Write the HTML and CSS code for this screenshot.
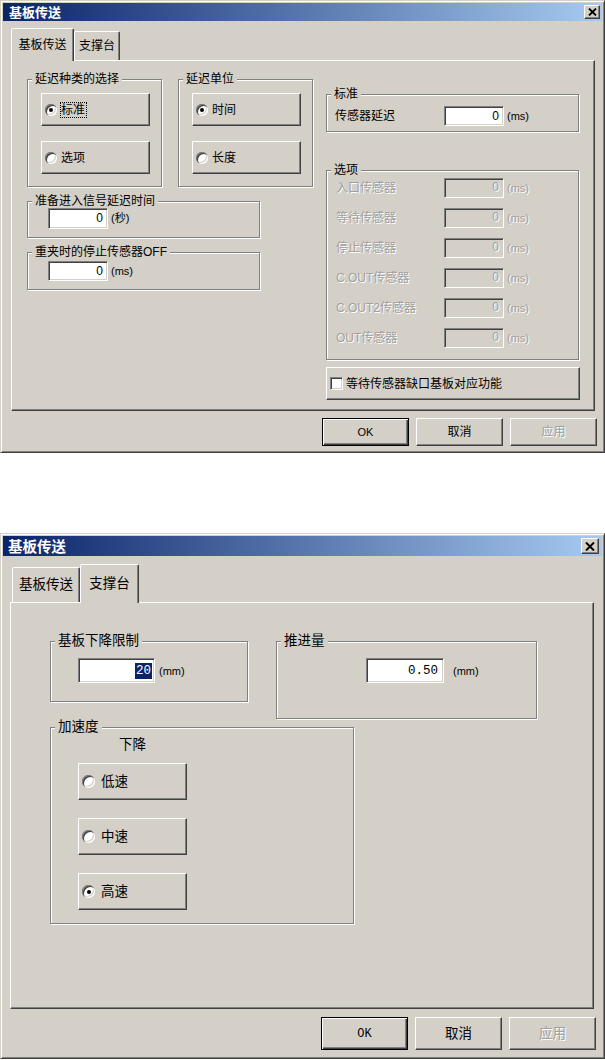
FILE: index.html
```html
<!DOCTYPE html>
<html lang="zh-CN">
<head>
    <meta charset="UTF-8">
    <title>基板传送</title>
    <link rel="stylesheet" href="styles.css">
</head>
<body>
    <!-- Tab 1: 基板传送 -->
    <div class="dialog dlg-delay">
        <div class="titlebar">
            <span class="title">基板传送</span>
            <span class="close-btn">
                <svg width="9" height="8" viewBox="0 0 9 8"><path d="M1 0.5l7 7M8 0.5l-7 7" stroke="#000" stroke-width="1.8"/></svg>
            </span>
        </div>
        <div class="dialog-body">
            <div class="tabs">
                <div class="tab active">基板传送</div>
                <div class="tab">支撑台</div>
            </div>
            <div class="panel">
                <div class="col-left">
                    <div class="group-row">
                        <div class="group g-choice">
                            <span class="caption">延迟种类的选择</span>
                            <div class="opt-btn"><span class="radio checked"></span><span class="focus">标准</span></div>
                            <div class="opt-btn"><span class="radio"></span><span>选项</span></div>
                        </div>
                        <div class="group g-choice">
                            <span class="caption">延迟单位</span>
                            <div class="opt-btn"><span class="radio checked"></span><span>时间</span></div>
                            <div class="opt-btn"><span class="radio"></span><span>长度</span></div>
                        </div>
                    </div>
                    <div class="group g-ready">
                        <span class="caption">准备进入信号延迟时间</span>
                        <div class="field-row">
                            <span class="field">0</span><span class="unit">(秒)</span>
                        </div>
                    </div>
                    <div class="group g-reclamp">
                        <span class="caption">重夹时的停止传感器OFF</span>
                        <div class="field-row">
                            <span class="field">0</span><span class="unit">(ms)</span>
                        </div>
                    </div>
                </div>
                <div class="col-right">
                    <div class="group g-std">
                        <span class="caption">标准</span>
                        <div class="field-row">
                            <span class="label">传感器延迟</span><span class="field">0</span><span class="unit">(ms)</span>
                        </div>
                    </div>
                    <div class="group g-opts">
                        <span class="caption">选项</span>
                        <div class="field-row disabled">
                            <span class="label">入口传感器</span><span class="field">0</span><span class="unit">(ms)</span>
                        </div>
                        <div class="field-row disabled">
                            <span class="label">等待传感器</span><span class="field">0</span><span class="unit">(ms)</span>
                        </div>
                        <div class="field-row disabled">
                            <span class="label">停止传感器</span><span class="field">0</span><span class="unit">(ms)</span>
                        </div>
                        <div class="field-row disabled">
                            <span class="label">C.OUT传感器</span><span class="field">0</span><span class="unit">(ms)</span>
                        </div>
                        <div class="field-row disabled">
                            <span class="label">C.OUT2传感器</span><span class="field">0</span><span class="unit">(ms)</span>
                        </div>
                        <div class="field-row disabled">
                            <span class="label">OUT传感器</span><span class="field">0</span><span class="unit">(ms)</span>
                        </div>
                    </div>
                    <div class="chk-btn"><span class="checkbox"></span><span>等待传感器缺口基板对应功能</span></div>
                </div>
            </div>
            <div class="actions">
                <span class="btn default">OK</span>
                <span class="btn">取消</span>
                <span class="btn disabled">应用</span>
            </div>
        </div>
    </div>

    <!-- Tab 2: 支撑台 -->
    <div class="dialog dlg-support">
        <div class="titlebar">
            <span class="title">基板传送</span>
            <span class="close-btn">
                <svg width="10" height="9" viewBox="0 0 10 9"><path d="M1 0.5l8 8M9 0.5l-8 8" stroke="#000" stroke-width="2"/></svg>
            </span>
        </div>
        <div class="dialog-body">
            <div class="tabs">
                <div class="tab">基板传送</div>
                <div class="tab active">支撑台</div>
            </div>
            <div class="panel">
                <div class="group-row">
                    <div class="group g-limit">
                        <span class="caption">基板下降限制</span>
                        <div class="field-row">
                            <span class="field num"><span class="sel">20</span></span><span class="unit">(mm)</span>
                        </div>
                    </div>
                    <div class="group g-feed">
                        <span class="caption">推进量</span>
                        <div class="field-row">
                            <span class="field num">0.50</span><span class="unit">(mm)</span>
                        </div>
                    </div>
                </div>
                <div class="group g-accel">
                    <span class="caption">加速度</span>
                    <div class="sub-label">下降</div>
                    <div class="opt-btn"><span class="radio"></span><span>低速</span></div>
                    <div class="opt-btn"><span class="radio"></span><span>中速</span></div>
                    <div class="opt-btn"><span class="radio checked"></span><span>高速</span></div>
                </div>
            </div>
            <div class="actions">
                <span class="btn default">OK</span>
                <span class="btn">取消</span>
                <span class="btn disabled">应用</span>
            </div>
        </div>
    </div>
</body>
</html>
```

FILE: styles.css
```css
* {
    box-sizing: border-box;
}

body {
    margin: 0;
    background-color: #fff;
    font-family: "Liberation Sans", "Noto Sans CJK SC", sans-serif;
    font-size: 12px;
    line-height: 14px;
    color: #000;
}

/* Window frame */
.dialog {
    width: 605px;
    padding: 2px;
    background-color: #d4d0c8;
    border: 1px solid;
    border-color: #d4d0c8 #404040 #404040 #d4d0c8;
    box-shadow: inset 1px 1px #fff, inset -1px -1px #808080;
}

.dlg-delay {
    height: 453px;
}

.dlg-support {
    height: 526px;
    margin-top: 80px;
    font-size: 13.5px;
    line-height: 16px;
}

.titlebar {
    display: flex;
    align-items: center;
    justify-content: space-between;
    height: 18px;
    padding: 0 2px 0 6px;
    background: linear-gradient(to right, #0a246a, #a6caf0);
}

.title {
    color: #fff;
    font-weight: bold;
    font-size: 13px;
    font-family: "Noto Sans CJK SC", sans-serif;
}

.close-btn {
    display: flex;
    align-items: center;
    justify-content: center;
    width: 16px;
    height: 14px;
    background-color: #d4d0c8;
    border: 1px solid;
    border-color: #fff #404040 #404040 #fff;
    box-shadow: inset -1px -1px #808080;
}

.dlg-support .titlebar {
    height: 20px;
    padding: 0 3px 0 5px;
}

.dlg-support .title {
    font-size: 14.5px;
}

.dlg-support .close-btn {
    width: 18px;
    height: 16px;
}

.dialog-body {
    padding: 0 7px 0 8px;
}

.dlg-support .dialog-body {
    padding: 0 8px 0 7px;
}

/* Tabs */
.tabs {
    display: flex;
    align-items: flex-end;
    height: 32px;
    margin-top: 7px;
}

.tab {
    display: flex;
    align-items: center;
    justify-content: center;
    width: 46px;
    height: 29px;
    background-color: #d4d0c8;
    border: 1px solid;
    border-bottom: none;
    border-color: #fff #404040 transparent #fff;
    border-radius: 2px 2px 0 0;
    box-shadow: inset -1px 0 #808080;
}

.tab.active {
    position: relative;
    z-index: 1;
    width: 63px;
    height: 33px;
    margin-bottom: -1px;
}

.dlg-support .tabs {
    height: 38px;
    margin-top: 8px;
    padding-left: 2px;
}

.dlg-support .tab {
    width: 68px;
    height: 35px;
}

.dlg-support .tab.active {
    width: 59px;
    height: 39px;
}

.panel {
    display: flex;
    gap: 13px;
    height: 351px;
    padding: 18px 0 0 15px;
    border: 1px solid;
    border-color: #fff #404040 #404040 #fff;
    box-shadow: inset -1px -1px #808080;
}

.dlg-support .panel {
    flex-direction: column;
    align-items: flex-start;
    gap: 0;
    height: 407px;
    padding: 38px 0 0 39px;
}

/* Group boxes */
.group {
    position: relative;
    border: 1px solid #808080;
    box-shadow: inset 1px 1px #fff, 1px 1px #fff;
}

.caption {
    position: absolute;
    top: -8px;
    left: 4px;
    padding: 0 3px;
    line-height: 14px;
    background-color: #d4d0c8;
    white-space: nowrap;
}

.dlg-support .caption {
    top: -9px;
    left: 4px;
    line-height: 16px;
}

.col-left {
    display: flex;
    flex-direction: column;
    align-items: flex-start;
}

.col-right {
    display: flex;
    flex-direction: column;
    width: 254px;
}

.group-row {
    display: flex;
    gap: 16px;
}

.g-choice {
    display: flex;
    flex-direction: column;
    gap: 15px;
    width: 135px;
    height: 108px;
    padding: 13px 0 0 13px;
}

.g-ready {
    width: 233px;
    height: 37px;
    margin-top: 14px;
    padding: 6px 0 0 20px;
}

.g-ready .field {
    height: 21px;
}

.g-reclamp {
    width: 233px;
    height: 38px;
    margin-top: 14px;
    padding: 8px 0 0 20px;
}

.g-std {
    width: 253px;
    height: 38px;
    margin-top: 15px;
    padding: 11px 0 0 8px;
}

.g-opts {
    display: flex;
    flex-direction: column;
    gap: 10px;
    width: 253px;
    height: 190px;
    margin-top: 38px;
    padding: 7px 0 0 9px;
}

.g-opts .label {
    width: 108px;
}

/* Push-like option buttons */
.opt-btn {
    display: flex;
    align-items: center;
    width: 109px;
    height: 33px;
    background-color: #d4d0c8;
    border: 1px solid;
    border-color: #fff #404040 #404040 #fff;
    box-shadow: inset -1px -1px #808080;
}

.radio {
    position: relative;
    flex: none;
    width: 12px;
    height: 12px;
    margin: 0 4px 0 3px;
    border-radius: 50%;
    background-color: #fff;
    box-shadow: inset 1px 1px #808080, inset 2px 2px #404040, inset -1px -1px #fff, inset -2px -2px #d4d0c8;
}

.radio.checked::after {
    content: "";
    position: absolute;
    top: 4px;
    left: 4px;
    width: 4px;
    height: 4px;
    border-radius: 50%;
    background-color: #000;
}

.focus {
    margin-left: -1px;
    padding-right: 1px;
    border: 1px dotted #000;
}

.chk-btn {
    display: flex;
    align-items: center;
    width: 254px;
    height: 33px;
    margin-top: 7px;
    padding-left: 3px;
    border: 1px solid;
    border-color: #fff #404040 #404040 #fff;
    box-shadow: inset -1px -1px #808080;
}

.checkbox {
    width: 13px;
    height: 13px;
    margin-right: 3px;
    background-color: #fff;
    border: 1px solid;
    border-color: #808080 #fff #fff #808080;
    box-shadow: inset 1px 1px #404040, inset -1px -1px #d4d0c8;
}

/* Edit fields */
.field-row {
    display: flex;
    align-items: center;
    height: 20px;
}

.label {
    width: 109px;
    white-space: nowrap;
}

.field {
    display: flex;
    align-items: center;
    justify-content: flex-end;
    width: 60px;
    height: 20px;
    padding-right: 4px;
    background-color: #fff;
    border: 1px solid;
    border-color: #808080 #fff #fff #808080;
    box-shadow: inset 1px 1px #404040, inset -1px -1px #d4d0c8;
}

.unit {
    margin-left: 3px;
    font-size: 11px;
}

.disabled .label,
.disabled .field,
.disabled .unit {
    color: #a0a0a0;
    text-shadow: 1px 1px #fff;
}

.disabled .field {
    align-items: flex-start;
    padding-top: 1px;
    background-color: #d4d0c8;
}

/* Support tab */
.dlg-support .group-row {
    align-items: flex-start;
    gap: 28px;
}

.dlg-support .field-row {
    height: 25px;
}

.dlg-support .field {
    height: 25px;
    padding-right: 4px;
}

.num {
    font-family: "Liberation Mono", monospace;
    font-size: 12.5px;
}

.sel {
    padding: 0 1px;
    background-color: #0a246a;
    color: #fff;
}

.g-limit {
    width: 198px;
    height: 61px;
    padding: 16px 0 0 27px;
}

.g-limit .field {
    width: 77px;
    padding-right: 2px;
}

.g-limit .unit {
    margin-left: 4px;
}

.g-feed {
    width: 261px;
    height: 78px;
    padding: 16px 0 0 89px;
}

.g-feed .field {
    width: 78px;
    padding-right: 5px;
}

.g-feed .unit {
    margin-left: 9px;
}

.g-accel {
    display: flex;
    flex-direction: column;
    gap: 18px;
    width: 304px;
    height: 197px;
    margin-top: 8px;
    padding: 9px 0 0 27px;
}

.g-accel .sub-label {
    margin: 0 0 -8px 41px;
}

.g-accel .opt-btn {
    width: 109px;
    height: 37px;
}

.g-accel .radio {
    width: 13px;
    height: 13px;
    margin-right: 6px;
}

.g-accel .radio.checked::after {
    top: 4.5px;
    left: 4.5px;
}

/* Bottom buttons */
.actions {
    display: flex;
    justify-content: flex-end;
    gap: 7px;
    margin: 7px -2px 0 0;
}

.btn {
    display: flex;
    align-items: center;
    justify-content: center;
    width: 87px;
    height: 28px;
    border: 1px solid;
    border-color: #fff #404040 #404040 #fff;
    box-shadow: inset -1px -1px #808080;
}

.btn.default {
    border-color: #000;
    box-shadow: inset 1px 1px #fff, inset -1px -1px #404040, inset -2px -2px #808080;
    font-size: 11px;
}

.btn.disabled {
    color: #a0a0a0;
    text-shadow: 1px 1px #fff;
}

.dlg-support .actions {
    margin: 8px -2px 0 0;
}

.dlg-support .btn {
    height: 33px;
}

.dlg-support .btn.default {
    font-family: "Liberation Mono", monospace;
    font-size: 12px;
}
```
